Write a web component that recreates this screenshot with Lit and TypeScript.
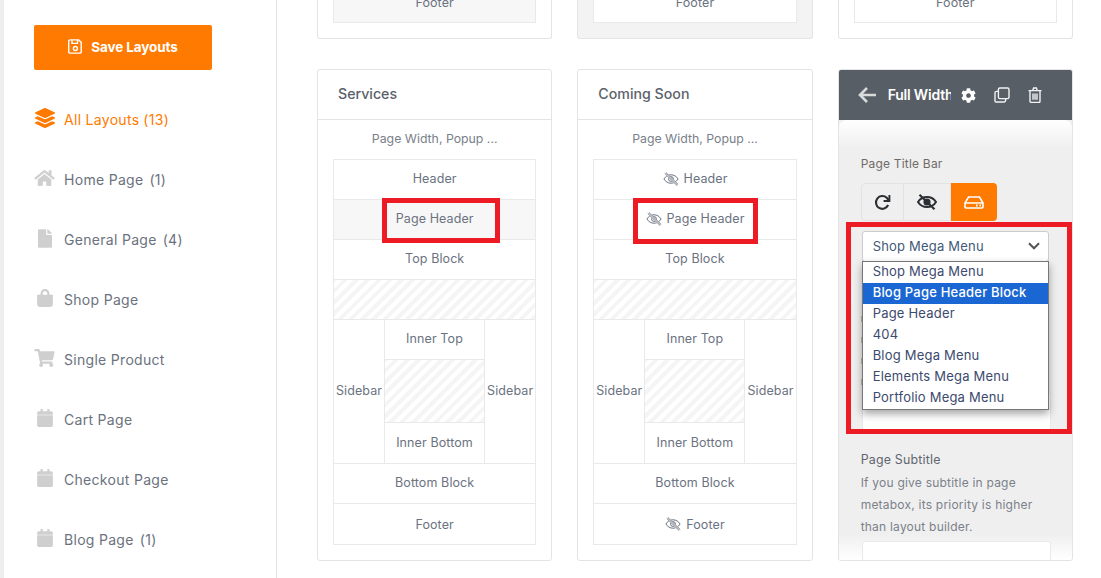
import { LitElement, html, css } from "lit";
import { customElement } from "lit/decorators.js";

const P = {
  layers: ["0 0 512 512", "M12.41 148.02l232.94 105.67c6.8 3.09 14.49 3.09 21.29 0l232.94-105.67c16.55-7.51 16.55-32.52 0-40.03L266.65 2.31a25.607 25.607 0 0 0-21.29 0L12.41 107.98c-16.55 7.51-16.55 32.53 0 40.04zm487.18 88.28l-58.09-26.33-161.64 73.27c-7.56 3.43-15.59 5.17-23.86 5.17s-16.29-1.74-23.86-5.17L70.51 209.97l-58.1 26.33c-16.55 7.5-16.55 32.5 0 40l232.94 105.59c6.8 3.08 14.49 3.08 21.29 0L499.59 276.3c16.55-7.5 16.55-32.5 0-40zm0 127.8l-57.87-26.23-161.86 73.37c-7.56 3.43-15.59 5.17-23.86 5.17s-16.29-1.74-23.86-5.17L70.29 337.87 12.41 364.1c-16.55 7.5-16.55 32.5 0 40l232.94 105.59c6.8 3.08 14.49 3.08 21.29 0L499.59 404.1c16.55-7.5 16.55-32.5 0-40z"],
  home: ["0 0 576 512", "M280.37 148.26L96 300.11V464a16 16 0 0 0 16 16l112.06-.29a16 16 0 0 0 15.92-16V368a16 16 0 0 1 16-16h64a16 16 0 0 1 16 16v95.64a16 16 0 0 0 16 16.05L464 480a16 16 0 0 0 16-16V300L295.67 148.26a12.19 12.19 0 0 0-15.3 0zM571.6 251.47L488 182.56V44.05a12 12 0 0 0-12-12h-56a12 12 0 0 0-12 12v72.61L318.47 43a48 48 0 0 0-61 0L4.34 251.47a12 12 0 0 0-1.6 16.9l25.5 31A12 12 0 0 0 45.15 301l235.22-193.74a12.19 12.19 0 0 1 15.3 0L530.9 301a12 12 0 0 0 16.9-1.6l25.5-31a12 12 0 0 0-1.7-16.93z"],
  file: ["0 0 384 512", "M224 136V0H24C10.7 0 0 10.7 0 24v464c0 13.3 10.7 24 24 24h336c13.3 0 24-10.7 24-24V160H248c-13.2 0-24-10.8-24-24zm160-14.1v6.1H256V0h6.1c6.4 0 12.5 2.5 17 7l97.9 98c4.5 4.5 7 10.6 7 16.9z"],
  bag: ["0 0 448 512", "M352 160v-32C352 57.42 294.579 0 224 0 153.42 0 96 57.42 96 128v32H0v272c0 44.183 35.817 80 80 80h288c44.183 0 80-35.817 80-80V160h-96zm-192-32c0-35.29 28.71-64 64-64s64 28.71 64 64v32H160v-32z"],
  cart: ["0 0 576 512", "M528.12 301.319l47.273-208C578.806 78.301 567.391 64 551.99 64H159.208l-9.166-44.81C147.758 8.021 137.93 0 126.529 0H24C10.745 0 0 10.745 0 24v16c0 13.255 10.745 24 24 24h69.883l70.248 343.435C147.325 417.1 136 435.222 136 456c0 30.928 25.072 56 56 56s56-25.072 56-56c0-15.674-6.447-29.835-16.824-40h209.647C430.447 426.165 424 440.326 424 456c0 30.928 25.072 56 56 56s56-25.072 56-56c0-22.172-12.888-41.332-31.579-50.405l5.517-24.276c3.413-15.018-8.002-29.319-23.403-29.319H218.117l-6.545-32h293.145c11.206 0 20.92-7.754 23.403-18.681z"],
  cal: ["0 0 448 512", "M12 180h424c6.6 0 12 5.4 12 12v272c0 26.5-21.5 48-48 48H48c-26.5 0-48-21.5-48-48V192c0-6.6 5.4-12 12-12zm436-32v-36c0-26.5-21.5-48-48-48h-48V12c0-6.6-5.4-12-12-12h-40c-6.6 0-12 5.4-12 12v52H160V12c0-6.6-5.4-12-12-12h-40c-6.6 0-12 5.4-12 12v52H48C21.5 64 0 85.5 0 112v36c0 6.6 5.4 12 12 12h424c6.6 0 12-5.4 12-12z"],
  cog: ["0 0 512 512", "M487.4 315.7l-42.6-24.6c4.3-23.2 4.3-47 0-70.2l42.6-24.6c4.9-2.8 7.1-8.6 5.5-14-11.1-35.6-30-67.8-54.7-94.6-3.8-4.1-10-5.1-14.8-2.3L380.8 110c-17.9-15.4-38.5-27.3-60.8-35.1V25.8c0-5.6-3.9-10.5-9.4-11.7-36.7-8.2-74.3-7.8-109.2 0-5.5 1.2-9.4 6.1-9.4 11.7V75c-22.2 7.9-42.8 19.8-60.8 35.1L88.7 85.5c-4.9-2.8-11-1.9-14.8 2.3-24.7 26.7-43.6 58.9-54.7 94.6-1.7 5.4.6 11.2 5.5 14L67.3 221c-4.3 23.2-4.3 47 0 70.2l-42.6 24.6c-4.9 2.8-7.1 8.6-5.5 14 11.1 35.6 30 67.8 54.7 94.6 3.8 4.1 10 5.1 14.8 2.3l42.6-24.6c17.9 15.4 38.5 27.3 60.8 35.1v49.2c0 5.6 3.9 10.5 9.4 11.7 36.7 8.2 74.3 7.8 109.2 0 5.5-1.2 9.4-6.1 9.4-11.7v-49.2c22.2-7.9 42.8-19.8 60.8-35.1l42.6 24.6c4.9 2.8 11 1.9 14.8-2.3 24.7-26.7 43.6-58.9 54.7-94.6 1.5-5.5-.7-11.3-5.6-14.1zM256 336c-44.1 0-80-35.9-80-80s35.9-80 80-80 80 35.9 80 80-35.9 80-80 80z"],
};

const fa = (k: keyof typeof P, w: number, h: number) =>
  html`<svg class="fa" width=${w} height=${h} viewBox=${P[k][0]}><path fill="currentColor" d=${P[k][1]}></path></svg>`;

const eyeOff = html`<svg class="eye" width="16" height="14" viewBox="0 0 16 14" fill="none" stroke="#6c7380" stroke-width="1">
  <path d="M.9 7C2.6 4.3 5 2.8 8 2.8s5.4 1.5 7.1 4.2C13.4 9.7 11 11.2 8 11.2S2.6 9.700.9 7z"></path>
  <path d="M5.600 7A2.400 2.400 0 0 1 8 4.600 2.400 2.400 0 0 1 10.400 7 2.400 2.400 0 0 1 8 9.400 2.400 2.400 0 0 1 5.600 7z"></path>
  <path d="M2 .8l12.600 12.400" stroke="#fff" stroke-width="2.400"></path>
  <path d="M1.800 1.400l12.400 12.200M2.800.4l12.400 12.200"></path></svg>`;

const NAV: [keyof typeof P, string, string, number, number][] = [
  ["home", "Home Page", "(1)", 21, 18],
  ["file", "General Page", "(4)", 14, 19],
  ["bag", "Shop Page", "", 16, 18],
  ["cart", "Single Product", "", 21, 18],
  ["cal", "Cart Page", "", 16, 18],
  ["cal", "Checkout Page", "", 16, 18],
  ["cal", "Blog Page", "(1)", 16, 18],
];

const OPTIONS = ["Shop Mega Menu", "Blog Page Header Block", "Page Header", "404", "Blog Mega Menu", "Elements Mega Menu", "Portfolio Mega Menu"];

@customElement("app-root")
export class AppRoot extends LitElement {
  static styles = css`
    :host { display: flex; position: relative; width: 1101px; height: 578px; overflow: hidden; background: #fff;
      font-family: Inter, "Noto Sans", sans-serif; color: #6b7280; }
    * { box-sizing: border-box; }
    .strip { width: 4px; background: #eee; flex: none; }
    .side { width: 273px; flex: none; border-right: 1px solid #e4e4e4; padding: 25px 0 0 30px; }
    .save { width: 178px; height: 45px; border-radius: 2px; background: #ff7a00; color: #fff; display: flex; align-items: center;
      justify-content: center; gap: 8px; font-weight: 700; font-size: 13.5px; letter-spacing: -.1px; padding-bottom: 2px; }
    .nav { margin-top: 20px; display: flex; flex-direction: column; }
    .item { height: 60px; display: flex; align-items: center; font-size: 14px; letter-spacing: .3px; color: #6b727e; padding-bottom: 2px; }
    .item.on { color: #ff7a00; }
    .ic { width: 30px; flex: none; color: #cfcfcf; display: flex; }
    .ic .w { width: 21px; display: flex; justify-content: center; margin-top: -2px; }
    .item.on .ic { color: #ff7a00; }
    .count { margin-left: 6px; }
    .on .count { margin-left: 4px; }
    .main { flex: 1; padding-left: 40px; }
    .grid { display: grid; grid-template-columns: repeat(3, 235.33px); column-gap: 25px; row-gap: 30px; grid-template-rows: 39px 492px; }
    .card { border: 1px solid #e4e4e4; border-radius: 3px; background: #fff; display: flex; flex-direction: column; overflow: hidden; }
    .stub { border-top: none; border-radius: 0 0 3px 3px; justify-content: flex-end; padding: 0 15px 15px; }
    .stub.grey { background: #f3f3f3; }
    .stub .cell { height: 41px; flex: none; border: 1px solid #e9e9e9; border-top: none; background: #fff; padding-bottom: 0; }
    .stub.first .cell { background: #f7f7f7; }
    .title { height: 50px; flex: none; border-bottom: 1px solid #e4e4e4; display: flex; align-items: center; padding: 0 0 2px 20px;
      font-size: 14.2px; font-weight: 500; color: #5b626b; }
    .sub { height: 39px; flex: none; display: flex; align-items: center; justify-content: center; font-size: 12.3px; color: #7a808a; padding-bottom: 2px; }
    .lay { margin: 0 15px; border: 1px solid #e9e9e9; display: flex; flex-direction: column; }
    .cell { height: 40px; flex: none; display: flex; align-items: center; justify-content: center; gap: 5px; font-size: 12.5px; letter-spacing: .1px; color: #6b7280; padding-bottom: 2px; }
    .lay > .cell:not(:last-child), .mid .cell:first-child { border-bottom: 1px solid #e9e9e9; }
    .lay > .cell:last-child { padding-bottom: 0; }
    .tint { background: #f7f7f7; }
    .hatch { background: repeating-linear-gradient(-45deg, #f5f5f5 0 4px, #fff 4px 8px); }
    .lay > .hatch { height: 40px; border-bottom: 1px solid #e9e9e9; flex: none; }
    .three { display: grid; grid-template-columns: 50px 101px 1fr; height: 144px; border-bottom: 1px solid #e9e9e9; flex: none; }
    .mid { border-left: 1px solid #e9e9e9; border-right: 1px solid #e9e9e9; display: flex; flex-direction: column; }
    .mid .hatch { flex: 1; border-bottom: 1px solid #e9e9e9; }
    .sb { display: flex; align-items: center; justify-content: center; font-size: 12.5px; color: #6b7280; letter-spacing: .1px; padding-bottom: 2px; }
    .panel { background: #efefef; position: relative; }
    .phead { height: 50px; flex: none; background: #575e66; display: flex; align-items: center; padding-left: 19px; color: #fff; }
    .arrow { flex: none; }
    .pname { width: 63px; margin-left: 12px; overflow: hidden; white-space: nowrap; font-weight: 600; font-size: 14px; letter-spacing: -.2px; padding-bottom: 2px; }
    .acts { display: flex; align-items: center; margin-left: 10px; gap: 18px; }
    .pbody { flex: 1; position: relative; padding: 35.5px 22px 0; overflow: hidden; border-radius: 8px 8px 0 0;
      background: linear-gradient(#fff 0, #efefef 28px, #efefef calc(100% - 26px), #fff 100%); }
    .lab { font-size: 12px; line-height: 16px; letter-spacing: .2px; color: #6f6a66; }
    .btns { display: flex; height: 38px; margin-top: 11.5px; width: 136px; border-radius: 4px; }
    .btns div { display: flex; align-items: center; justify-content: center; border: 1px solid #e2e2e2; }
    .b1 { width: 44px; border-radius: 4px 0 0 4px; }
    .b2 { width: 47px; border-left: none !important; }
    .b3 { width: 46px; background: #ff7a00; border: none !important; border-radius: 0 4px 4px 0; }
    .select { margin: 10px 0 0 1px; width: 187px; height: 31px; background: #fff; border: 1px solid #ccc; border-radius: 3px;
      display: flex; align-items: center; justify-content: space-between; padding: 0 8px 2px 10px; font-size: 13px; letter-spacing: .2px; color: #3f5a78; }
    .ticks { margin-top: 54px; height: 75px; display: flex; flex-direction: column; gap: 15px; }
    .ticks i { display: block; width: 2px; height: 6px; background: #c8b49c; flex: none; }
    .input { margin-left: 1px; width: 189px; height: 40px; background: #fff; border: 1px solid #e8e8e8; border-radius: 3px; }
    .psub { margin-top: 21px; font-size: 12.4px; line-height: 16px; letter-spacing: .2px; color: #5f6670; }
    .pdesc { margin-top: 4px; font-size: 12px; line-height: 22px; letter-spacing: .22px; color: #7b818a; width: 200px; }
    .input2 { margin-left: 1px; width: 189px; height: 40px; background: #fff; border: 1px solid #e9e9e9; border-radius: 3px; margin-top: 3px; }
    .drop { position: absolute; left: 23px; top: 141px; width: 187px; height: 149px; background: #fff; border: 1px solid #767676;
      box-shadow: 0 4px 8px rgba(0,0,0,.35); z-index: 2; }
    .opt { height: 21px; line-height: 19px; padding-left: 10px; font-size: 13px; letter-spacing: .2px; color: #3c4a6e; white-space: nowrap; }
    .opt.sel { background: #1a66d2; color: #fff; font-weight: 500; }
    .red { position: absolute; border: 5px solid #ed1c24; z-index: 5; pointer-events: none; }
    .r1 { left: 382px; top: 198px; width: 118px; height: 45px; }
    .r2 { left: 633px; top: 198px; width: 125px; height: 46px; }
    .r3 { left: 846px; top: 222px; width: 226px; height: 212px; }
  `;

  private layout(hide: boolean, tint: boolean) {
    const eye = (on: boolean) => (on ? eyeOff : "");
    return html`<div class="lay">
      <div class="cell">${eye(hide)}Header</div>
      <div class="cell ${tint ? "tint" : ""}">${eye(hide)}Page Header</div>
      <div class="cell">Top Block</div>
      <div class="hatch"></div>
      <div class="three">
        <div class="sb">Sidebar</div>
        <div class="mid"><div class="cell">Inner Top</div><div class="hatch"></div><div class="cell">Inner Bottom</div></div>
        <div class="sb">Sidebar</div>
      </div>
      <div class="cell">Bottom Block</div>
      <div class="cell">${eye(hide)}Footer</div>
    </div>`;
  }

  render() {
    return html`
      <div class="strip"></div>
      <aside class="side">
        <div class="save">
          <svg width="15" height="15" viewBox="0 0 15 15" fill="none" stroke="#fff" stroke-width="1.4">
            <path d="M1.7.9h9l2.5 2.5v9.5a1.2 1.2 0 0 1-1.2 1.2H1.9a1.2 1.2 0 0 1-1.2-1.2V2.1A1.2 1.2 0 0 1 1.9.9z"></path>
            <path d="M4 1v3.4h5.5V1"></path><circle cx="7.4" cy="9.5" r="2"></circle>
          </svg>
          Save Layouts
        </div>
        <nav class="nav">
          <div class="item on"><span class="ic"><span class="w">${fa("layers", 20, 20)}</span></span>All Layouts<span class="count">(13)</span></div>
          ${NAV.map(([k, t, c, w, h]) => html`<div class="item"><span class="ic"><span class="w">${fa(k, w, h)}</span></span>${t}${c ? html`<span class="count">${c}</span>` : ""}</div>`)}
        </nav>
      </aside>
      <main class="main">
        <div class="grid">
          <div class="card stub first"><div class="cell">Footer</div></div>
          <div class="card stub grey"><div class="cell">Footer</div></div>
          <div class="card stub"><div class="cell">Footer</div></div>

          <section class="card">
            <div class="title">Services</div>
            <div class="sub">Page Width, Popup ...</div>
            ${this.layout(false, true)}
          </section>
          <section class="card">
            <div class="title">Coming Soon</div>
            <div class="sub">Page Width, Popup ...</div>
            ${this.layout(true, false)}
          </section>
          <section class="card panel">
            <div class="phead">
              <svg class="arrow" width="18" height="18" viewBox="0 0 18 18" fill="none" stroke="#d8dadc" stroke-width="2.6">
                <path d="M9 2L2 9l7 7M2.5 9H18"></path>
              </svg>
              <div class="pname">Full Width</div>
              <div class="acts">
                ${fa("cog", 15, 15)}
                <svg width="16" height="16" viewBox="0 0 16 16" fill="none" stroke="#f2f2f2" stroke-width="1.4">
                  <rect x="4.4" y="1" width="10.6" height="10.6" rx="1.4"></rect>
                  <path d="M4.4 4.4H2.4A1.4 1.4 0 0 0 1 5.8v8.2a1 1 0 0 0 1 1h8.2a1.4 1.4 0 0 0 1.4-1.4v-2"></path>
                </svg>
                <svg width="14" height="16" viewBox="0 0 14 16" fill="none" stroke="#f2f2f2" stroke-width="1.4">
                  <path d="M.5 3.6h13M2 3.6v10.6A1.3 1.3 0 0 0 3.3 15.5h7.4a1.3 1.3 0 0 0 1.3-1.3V3.6M4.7 3.4l.9-2.4h2.8l.9 2.4M5 6.4v6.4M7 6.4v6.4M9 6.4v6.4"></path>
                </svg>
              </div>
            </div>
            <div class="pbody">
              <div class="lab">Page Title Bar</div>
              <div class="btns">
                <div class="b1">
                  <svg width="17" height="17" viewBox="0 0 16 16" fill="none" stroke="#2c2f33" stroke-width="2">
                    <path d="M13.3 10.4A6 6 0 1 1 12 3.6L14 6"></path><path d="M14.5 1v5.6H9" stroke-width="1.8"></path>
                  </svg>
                </div>
                <div class="b2">
                  <svg width="20" height="16" viewBox="0 0 20 16" fill="none" stroke="#2c2f33" stroke-width="2">
                    <path d="M1 8c2-3.2 5-5 9-5s7 1.800 9 5c-2 3.200-5 5-9 5s-7-1.800-9-5z"></path>
                    <circle cx="10" cy="8" r="2.6" fill="#2c2f33"></circle>
                    <path d="M2.500.8l15 14.400" stroke-width="2.200"></path>
                  </svg>
                </div>
                <div class="b3">
                  <svg width="20" height="13" viewBox="0 0 20 13" fill="none" stroke="#fff" stroke-width="1.6">
                    <path d="M4.500 1h11l3.500 6v4a1 1 0 0 1-1 1H2a1 1 0 0 1-1-1V7z"></path><path d="M1 7h18"></path>
                    <path d="M12 9.500h1.600M15.500 9.500h1.600" stroke-width="1.800"></path>
                  </svg>
                </div>
              </div>
              <div class="select">Shop Mega Menu
                <svg width="12" height="8" viewBox="0 0 12 8" fill="none" stroke="#555" stroke-width="2"><path d="M1 1.300l5 5 5-5"></path></svg>
              </div>
              <div class="ticks"><i></i><i></i><i></i><i></i></div>
              <div class="input"></div>
              <div class="psub">Page Subtitle</div>
              <div class="pdesc">If you give subtitle in page metabox, its priority is higher than layout builder.</div>
              <div class="input2"></div>
              <div class="drop">
                ${OPTIONS.map((o, i) => html`<div class="opt ${i === 1 ? "sel" : ""}">${o}</div>`)}
              </div>
            </div>
          </section>
        </div>
      </main>
      <div class="red r1"></div>
      <div class="red r2"></div>
      <div class="red r3"></div>
    `;
  }
}
